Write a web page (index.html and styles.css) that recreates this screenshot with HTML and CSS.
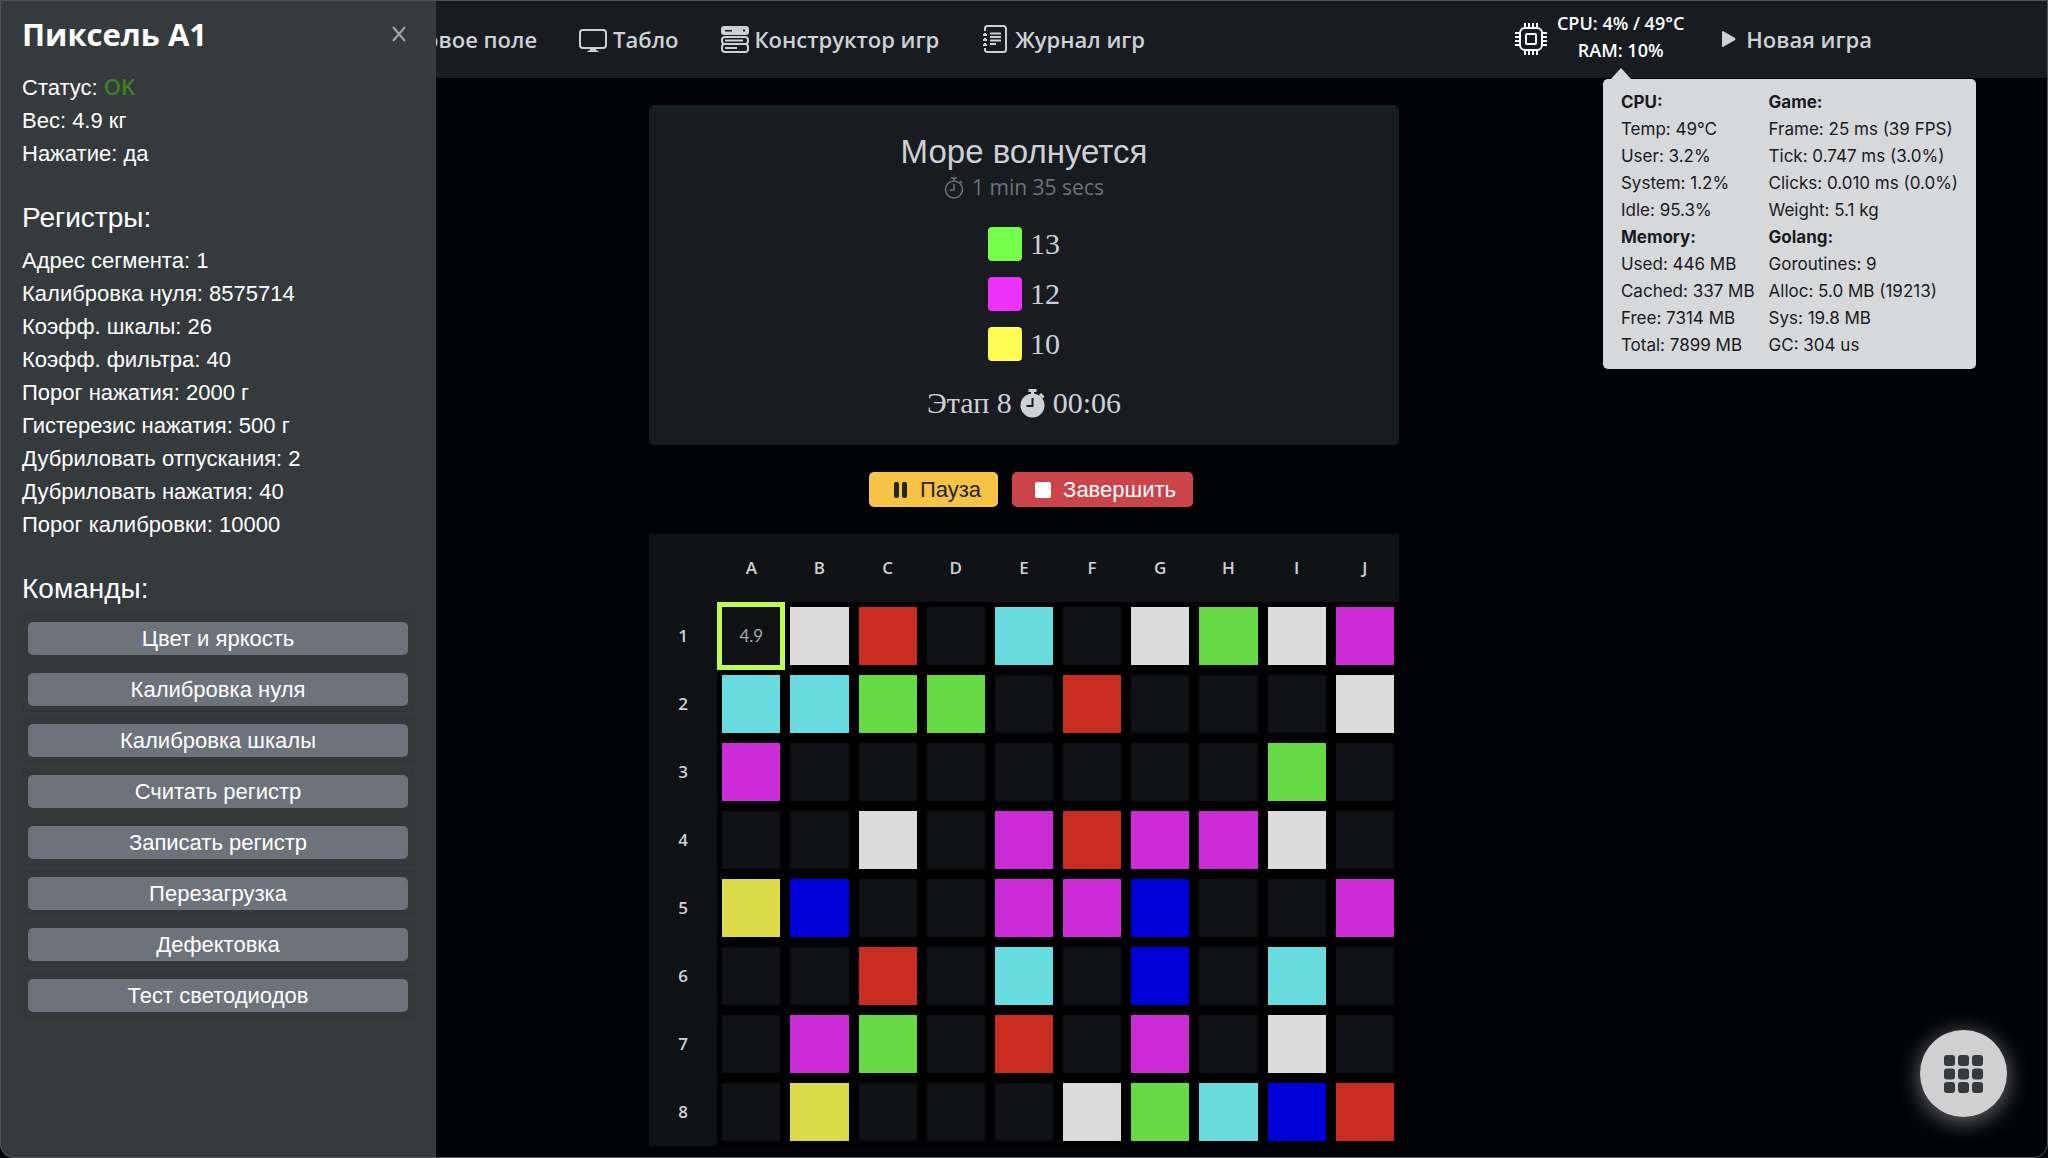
FILE: index.html
```html
<!DOCTYPE html>
<html lang="ru">
<head>
<meta charset="utf-8">
<title>Пиксель A1</title>
<link rel="stylesheet" href="styles.css">
</head>
<body>
<header class="navbar">
  <nav class="nav-links">
    <a class="nav-link" href="#field">
      <svg class="nav-icon" viewBox="0 0 28 28"><path d="M2 2h24v24H2zM10 2v24M18 2v24M2 10h24M2 18h24" fill="none" stroke="currentColor" stroke-width="2"/></svg>
      Игровое поле
    </a>
    <a class="nav-link" href="#board">
      <svg class="nav-icon" viewBox="0 0 28 28"><rect x="1" y="5" width="26" height="18" rx="3" fill="none" stroke="currentColor" stroke-width="2"/><path d="M11 23h6v2l2.500 1v1h-11v-1l2.500-1z" fill="currentColor"/></svg>
      Табло
    </a>
    <a class="nav-link" href="#builder">
      <svg class="nav-icon" viewBox="0 0 28 28"><path fill-rule="evenodd" fill="currentColor" d="M3 1h22a3 3 0 0 1 3 3v3a3 3 0 0 1-3 3H3a3 3 0 0 1-3-3V4a3 3 0 0 1 3-3zM4 5v1.500h7V5zM22 4.500v2h2v-2z"/><rect x="1" y="12" width="26" height="7" rx="3" fill="none" stroke="currentColor" stroke-width="2"/><rect x="1" y="19" width="26" height="8" rx="3" fill="none" stroke="currentColor" stroke-width="2"/><path d="M4 15.500h18M4 23h12" stroke="currentColor" stroke-width="2"/></svg>
      Конструктор игр
    </a>
    <a class="nav-link" href="#journal">
      <svg class="nav-icon" viewBox="0 0 28 28"><path d="M4 6V3.500a2.500 2.500 0 0 1 2.500-2.500h16a2.500 2.500 0 0 1 2.500 2.500v21a2.500 2.500 0 0 1-2.500 2.500h-16a2.500 2.500 0 0 1-2.500-2.500V23" fill="none" stroke="currentColor" stroke-width="2"/><path d="M2 10h4M2 15h4M2 20h4M4 8v3M4 13v3M4 18v3" stroke="currentColor" stroke-width="2"/><path d="M9 8.500h11M9 12h11M9 15.500h11M9 19h6" stroke="currentColor" stroke-width="2"/></svg>
      Журнал игр
    </a>
  </nav>
  <div class="nav-side">
    <div class="stats">
      <svg class="cpu-icon" viewBox="0 0 32 32" fill="none" stroke="currentColor" stroke-width="2"><rect x="5" y="5" width="22" height="22" rx="5"/><rect x="11" y="11" width="10" height="10" rx="1"/><path d="M10 5V0M14 5V0M18 5V0M22 5V0M10 27v5M14 27v5M18 27v5M22 27v5M5 10H0M5 14H0M5 18H0M5 22H0M27 10h5M27 14h5M27 18h5M27 22h5"/></svg>
      <div class="stats-text">CPU: 4% / 49°C<br>RAM: 10%
        <div class="tooltip" role="tooltip">
          <dl class="stat-col">
            <dt>CPU:</dt><dd>Temp: 49°C</dd><dd>User: 3.2%</dd><dd>System: 1.2%</dd><dd>Idle: 95.3%</dd>
            <dt>Memory:</dt><dd>Used: 446 MB</dd><dd>Cached: 337 MB</dd><dd>Free: 7314 MB</dd><dd>Total: 7899 MB</dd>
          </dl>
          <dl class="stat-col">
            <dt>Game:</dt><dd>Frame: 25 ms (39 FPS)</dd><dd>Tick: 0.747 ms (3.0%)</dd><dd>Clicks: 0.010 ms (0.0%)</dd><dd>Weight: 5.1 kg</dd>
            <dt>Golang:</dt><dd>Goroutines: 9</dd><dd>Alloc: 5.0 MB (19213)</dd><dd>Sys: 19.8 MB</dd><dd>GC: 304 us</dd>
          </dl>
        </div>
      </div>
    </div>
    <a class="nav-link new-game" href="#new">
      <svg class="play-icon" viewBox="0 0 14 16"><path d="M0 1Q0 0 1 0L13 7Q14 8 13 9L1 16Q0 16 0 15z" fill="currentColor"/></svg>
      Новая игра
    </a>
  </div>
</header>

<aside class="sidebar">
  <div class="sidebar-head">
    <h1>Пиксель A1</h1>
    <button class="close" type="button" aria-label="Закрыть"><svg viewBox="0 0 14 14"><path d="M1 0l12 14M13 0L1 14" stroke="currentColor" stroke-width="2"/></svg></button>
  </div>
  <ul class="lines">
    <li>Статус: <span class="ok">OK</span></li>
    <li>Вес: 4.9 кг</li>
    <li>Нажатие: да</li>
  </ul>
  <h2>Регистры:</h2>
  <ul class="lines">
    <li>Адрес сегмента: 1</li>
    <li>Калибровка нуля: 8575714</li>
    <li>Коэфф. шкалы: 26</li>
    <li>Коэфф. фильтра: 40</li>
    <li>Порог нажатия: 2000 г</li>
    <li>Гистерезис нажатия: 500 г</li>
    <li>Дубриловать отпускания: 2</li>
    <li>Дубриловать нажатия: 40</li>
    <li>Порог калибровки: 10000</li>
  </ul>
  <h2>Команды:</h2>
  <ul class="commands">
    <li><button type="button">Цвет и яркость</button></li>
    <li><button type="button">Калибровка нуля</button></li>
    <li><button type="button">Калибровка шкалы</button></li>
    <li><button type="button">Считать регистр</button></li>
    <li><button type="button">Записать регистр</button></li>
    <li><button type="button">Перезагрузка</button></li>
    <li><button type="button">Дефектовка</button></li>
    <li><button type="button">Тест светодиодов</button></li>
  </ul>
</aside>

<main class="game">
  <section class="card">
    <h2 class="card-title">Море волнуется</h2>
    <div class="elapsed">
      <svg class="watch" viewBox="0 0 20 22" fill="none" stroke="currentColor"><circle cx="10" cy="12.500" r="8.500" stroke-width="1.500"/><path d="M10 4V1M7 1h6M10 7v6H5.500M16 4l2 2" stroke-width="1.500"/></svg>
      1 min 35 secs
    </div>
    <ul class="scores">
      <li><span class="swatch lime"></span>13</li>
      <li><span class="swatch pink"></span>12</li>
      <li><span class="swatch sun"></span>10</li>
    </ul>
    <div class="stage">Этап 8
      <svg class="stage-watch" viewBox="0 0 25 29"><circle cx="12.500" cy="16.500" r="12" fill="currentColor"/><path d="M12.500 5V2M8.500 1.500h8M20 5l3.500 3.500" stroke="currentColor" stroke-width="3"/><path d="M12.500 9v8H6.500" fill="none" stroke="#181b1f" stroke-width="2"/></svg>
      00:06
    </div>
  </section>
  <div class="actions">
    <button class="btn pause" type="button"><svg viewBox="0 0 16 16"><rect x="2" y="0" width="5" height="16" rx="2" fill="currentColor"/><rect x="10" y="0" width="5" height="16" rx="2" fill="currentColor"/></svg>Пауза</button>
    <button class="btn stop" type="button"><svg viewBox="0 0 16 16"><rect width="16" height="16" rx="2" fill="currentColor"/></svg>Завершить</button>
  </div>
  <table class="board">
    <thead><tr><th></th><th>A</th><th>B</th><th>C</th><th>D</th><th>E</th><th>F</th><th>G</th><th>H</th><th>I</th><th>J</th></tr></thead>
    <tbody>
      <tr><th>1</th><td class="sel">4.9</td><td class="w"></td><td class="r"></td><td></td><td class="c"></td><td></td><td class="w"></td><td class="g"></td><td class="w"></td><td class="m"></td></tr>
      <tr><th>2</th><td class="c"></td><td class="c"></td><td class="g"></td><td class="g"></td><td></td><td class="r"></td><td></td><td></td><td></td><td class="w"></td></tr>
      <tr><th>3</th><td class="m"></td><td></td><td></td><td></td><td></td><td></td><td></td><td></td><td class="g"></td><td></td></tr>
      <tr><th>4</th><td></td><td></td><td class="w"></td><td></td><td class="m"></td><td class="r"></td><td class="m"></td><td class="m"></td><td class="w"></td><td></td></tr>
      <tr><th>5</th><td class="y"></td><td class="b"></td><td></td><td></td><td class="m"></td><td class="m"></td><td class="b"></td><td></td><td></td><td class="m"></td></tr>
      <tr><th>6</th><td></td><td></td><td class="r"></td><td></td><td class="c"></td><td></td><td class="b"></td><td></td><td class="c"></td><td></td></tr>
      <tr><th>7</th><td></td><td class="m"></td><td class="g"></td><td></td><td class="r"></td><td></td><td class="m"></td><td></td><td class="w"></td><td></td></tr>
      <tr><th>8</th><td></td><td class="y"></td><td></td><td></td><td></td><td class="w"></td><td class="g"></td><td class="c"></td><td class="b"></td><td class="r"></td></tr>
    </tbody>
  </table>
</main>

<button class="fab" type="button" aria-label="Меню">
  <svg viewBox="0 0 39 38" fill="currentColor"><rect width="11" height="11" rx="3"/><rect x="14" width="11" height="11" rx="3"/><rect x="28" width="11" height="11" rx="3"/><rect y="13.500" width="11" height="11" rx="3"/><rect x="14" y="13.500" width="11" height="11" rx="3"/><rect x="28" y="13.500" width="11" height="11" rx="3"/><rect y="27" width="11" height="11" rx="3"/><rect x="14" y="27" width="11" height="11" rx="3"/><rect x="28" y="27" width="11" height="11" rx="3"/></svg>
</button>
<div class="frame"></div>
</body>
</html>
```
FILE: styles.css
```css
* { box-sizing: border-box; }
html { background: #010206; }
body {
  margin: 0;
  min-height: 100vh;
  background: #010206;
  color: #cdd1d6;
  font: 22px/33px "Liberation Sans", sans-serif;
}
h1, h2, ul, dl, dd { margin: 0; padding: 0; }
ul { list-style: none; }
button { font: inherit; color: inherit; border: 0; cursor: pointer; }
svg { display: block; flex: none; }

.navbar {
  display: flex;
  align-items: center;
  justify-content: space-between;
  height: 78px;
  padding: 0 176px 0 350px;
  background: #181b1f;
}
.nav-links, .nav-side, .stats { display: flex; align-items: center; }
.nav-links { gap: 42px; }
.nav-link {
  display: flex;
  align-items: center;
  gap: 6px;
  color: inherit;
  text-decoration: none;
  white-space: nowrap;
  font: 600 22px/33px "Open Sans", sans-serif;
}
.nav-icon { width: 28px; height: 28px; }
.nav-side { gap: 38px; }
.stats { gap: 10px; color: #fff; }
.cpu-icon { width: 32px; height: 32px; }
.stats-text {
  position: relative;
  padding-bottom: 4px;
  text-align: center;
  white-space: nowrap;
  font: 600 18px/27px "Open Sans", sans-serif;
}
.new-game { gap: 10px; }
.play-icon { width: 14px; height: 16px; }

.tooltip {
  position: absolute;
  z-index: 2;
  top: 69px;
  left: 46px;
  display: flex;
  gap: 14px;
  padding: 10px 18px;
  border-radius: 5px;
  background: #d7d8da;
  color: #181b1f;
  text-align: left;
  font: 17px/27px Inter, sans-serif;
}
.tooltip::before {
  content: "";
  position: absolute;
  top: -11px;
  left: 8px;
  border: 10px solid transparent;
  border-top: 0;
  border-bottom: 11px solid #d7d8da;
}
dt { font-weight: 700; }

.sidebar {
  position: absolute;
  top: 0;
  bottom: 0;
  left: 0;
  width: 436px;
  padding: 15px 22px;
  background: #353a3d;
  color: #fff;
}
.sidebar-head { display: flex; align-items: center; justify-content: space-between; margin-bottom: 17px; }
h1 { font: 700 31px/38px "Open Sans", sans-serif; }
.close { padding: 8px; background: none; color: #a5a8aa; }
.close svg { width: 14px; height: 16px; }
.ok { color: #388222; font-family: "Open Sans", sans-serif; font-weight: 600; }
.sidebar h2 { margin: 31px 0 9px; font-size: 28px; line-height: 34px; font-weight: 400; }
.commands { display: grid; gap: 5px; }
.commands li { padding: 6px 5px 5px; border: 1px solid #313639; background: #34393c; }
.commands button { display: block; width: 100%; padding: 0; border-radius: 5px; background: #6d737b; }

.game { width: 750px; max-width: 100%; margin: 27px auto 0; }
.card {
  padding: 28px 20px 25px;
  border-radius: 5px;
  background: #181b1f;
  text-align: center;
}
.card-title { font-size: 33px; line-height: 38px; font-weight: 400; }
.elapsed {
  display: flex;
  justify-content: center;
  align-items: center;
  gap: 8px;
  margin-bottom: 23px;
  color: #6d737b;
  font-family: "Open Sans", sans-serif;
  font-size: 21px;
}
.watch { width: 20px; height: 22px; }
.scores, .stage { font: 30px/34px "Liberation Serif", serif; }
.scores { display: grid; gap: 16px; }
.scores li { display: flex; justify-content: center; align-items: center; gap: 8px; }
.swatch { width: 34px; height: 34px; border-radius: 4px; }
.lime { background: #75ff4a; }
.pink { background: #eb31fa; }
.sun { background: #fffe54; }
.stage { display: flex; justify-content: center; align-items: center; gap: 8px; margin-top: 25px; }
.stage-watch { width: 25px; height: 29px; }

.actions { display: flex; justify-content: center; gap: 14px; margin: 27px 0; padding-left: 14px; }
.btn { display: flex; align-items: center; gap: 12px; height: 35px; padding: 0 17px 0 23px; border-radius: 5px; }
.btn svg { width: 16px; height: 16px; }
.pause { background: #f6c344; color: #212529; }
.stop { background: #cb444a; color: #fff; }

.board { width: 100%; table-layout: fixed; border-collapse: separate; border-spacing: 0; }
.board th, .board td { height: 68px; padding: 0; text-align: center; background: #101115; }
.board th { font: 600 17px/24px "Open Sans", sans-serif; }
.board td { border: 5px solid #000; color: #a5a8aa; font: 17px/24px Lato, sans-serif; }
.board .sel { border-color: #c0fb52; }
.board .w { background: #dcdcdc; }
.board .r { background: #c92c20; }
.board .c { background: #67dbde; }
.board .g { background: #67db46; }
.board .m { background: #cb2cd8; }
.board .y { background: #dcdc4a; }
.board .b { background: #0000d8; }

.fab {
  position: fixed;
  right: 41px;
  bottom: 41px;
  width: 87px;
  height: 87px;
  padding: 24px;
  border-radius: 50%;
  background: #d0d0d0;
  color: #353a3d;
  box-shadow: 0 4px 24px rgba(255, 255, 255, .45);
}
.fab svg { width: 39px; height: 38px; }
.frame {
  position: fixed;
  inset: 0;
  z-index: 3;
  border: 1px solid #505457;
  border-radius: 0 0 14px 14px;
  box-shadow: 0 0 0 14px #010206;
  pointer-events: none;
}
```
